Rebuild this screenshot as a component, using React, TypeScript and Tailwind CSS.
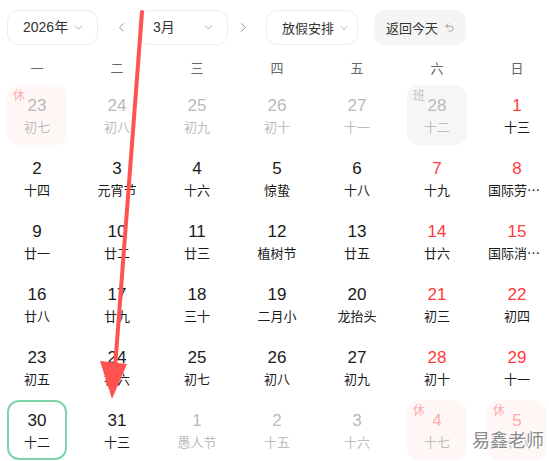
import { ChevronDown, ChevronLeft, ChevronRight, Undo2 } from 'lucide-react';

type Day = {
  d: number;
  lunar: string;
  muted?: boolean;
  red?: boolean;
  tag?: '休' | '班';
  today?: boolean;
};

const weeks: Day[][] = [
  [
    { d: 23, lunar: '初七', muted: true, tag: '休' },
    { d: 24, lunar: '初八', muted: true },
    { d: 25, lunar: '初九', muted: true },
    { d: 26, lunar: '初十', muted: true },
    { d: 27, lunar: '十一', muted: true },
    { d: 28, lunar: '十二', muted: true, tag: '班' },
    { d: 1, lunar: '十三', red: true },
  ],
  [
    { d: 2, lunar: '十四' },
    { d: 3, lunar: '元宵节' },
    { d: 4, lunar: '十六' },
    { d: 5, lunar: '惊蛰' },
    { d: 6, lunar: '十八' },
    { d: 7, lunar: '十九', red: true },
    { d: 8, lunar: '国际劳动妇女节', red: true },
  ],
  [
    { d: 9, lunar: '廿一' },
    { d: 10, lunar: '廿二' },
    { d: 11, lunar: '廿三' },
    { d: 12, lunar: '植树节' },
    { d: 13, lunar: '廿五' },
    { d: 14, lunar: '廿六', red: true },
    { d: 15, lunar: '国际消费者权益日', red: true },
  ],
  [
    { d: 16, lunar: '廿八' },
    { d: 17, lunar: '廿九' },
    { d: 18, lunar: '三十' },
    { d: 19, lunar: '二月小' },
    { d: 20, lunar: '龙抬头' },
    { d: 21, lunar: '初三', red: true },
    { d: 22, lunar: '初四', red: true },
  ],
  [
    { d: 23, lunar: '初五' },
    { d: 24, lunar: '初六' },
    { d: 25, lunar: '初七' },
    { d: 26, lunar: '初八' },
    { d: 27, lunar: '初九' },
    { d: 28, lunar: '初十', red: true },
    { d: 29, lunar: '十一', red: true },
  ],
  [
    { d: 30, lunar: '十二', today: true },
    { d: 31, lunar: '十三' },
    { d: 1, lunar: '愚人节', muted: true },
    { d: 2, lunar: '十五', muted: true },
    { d: 3, lunar: '十六', muted: true },
    { d: 4, lunar: '十七', muted: true, tag: '休' },
    { d: 5, lunar: '十八', muted: true, tag: '休' },
  ],
];

const weekdays = ['一', '二', '三', '四', '五', '六', '日'];

const DayCell = ({ day }: { day: Day }) => {
  const rest = day.tag === '休';
  const work = day.tag === '班';

  let box = 'border-2 border-transparent';
  if (day.today) box = 'border-2 border-[#7fd3ab]';
  else if (rest) box = 'border-2 border-transparent bg-[#fff6f6]';
  else if (work) box = 'border-2 border-transparent bg-[#f6f6f8]';

  let num = 'text-[#1a1a1a]';
  if (day.muted) num = rest && day.d < 10 ? 'text-[#ffaaaa]' : 'text-[#b9b9b9]';
  else if (day.red) num = 'text-[#ff3b3b]';

  const lunar = day.muted ? 'text-[#bdbdbd]' : 'text-[#1a1a1a]';

  return (
    <div className={`relative h-[60px] w-[60px] rounded-[12px] flex flex-col items-center pt-[8px] ${box}`}>
      {day.tag && (
        <span
          className={`absolute left-[4px] top-[1px] text-[12px] leading-[14px] ${
            rest ? 'text-[#ffaaaa]' : 'text-[#c4c4c4]'
          }`}
        >
          {day.tag}
        </span>
      )}
      <span className={`text-[17px] leading-[22px] ${num}`} style={{ fontFamily: '"Liberation Sans", Arial, sans-serif' }}>
        {day.d}
      </span>
      <span className={`mt-[1px] w-[58px] text-center truncate text-[13px] leading-[18px] ${lunar}`}>
        {day.lunar}
      </span>
    </div>
  );
};

export default function App() {
  return (
    <div
      className="relative w-[549px] h-[461px] overflow-hidden bg-white text-[#333]"
      style={{ fontFamily: '"Noto Sans CJK SC", "Noto Sans", sans-serif' }}
    >
      {/* Toolbar */}
      <div className="flex items-center pl-[7px] pt-[10px] h-[45px] whitespace-nowrap">
        <div className="w-[91px] h-[35px] rounded-[11px] border border-[#ececec] flex items-center pl-[15px] pr-[12px] justify-between">
          <span className="text-[14px]" style={{ fontFamily: '"Liberation Sans", "Noto Sans CJK SC", sans-serif' }}>
            2026年
          </span>
          <ChevronDown className="w-[13px] h-[13px] text-[#999]" strokeWidth={1.5} />
        </div>
        <ChevronLeft className="ml-[16px] w-[15px] h-[15px] text-[#888]" strokeWidth={1.5} />
        <div className="ml-[9px] w-[90px] h-[35px] rounded-[11px] border border-[#ececec] flex items-center pl-[14px] pr-[12px] justify-between">
          <span className="text-[14px]" style={{ fontFamily: '"Liberation Sans", "Noto Sans CJK SC", sans-serif' }}>
            3月
          </span>
          <ChevronDown className="w-[13px] h-[13px] text-[#999]" strokeWidth={1.5} />
        </div>
        <ChevronRight className="ml-[8px] w-[15px] h-[15px] text-[#888]" strokeWidth={1.5} />
        <div className="ml-[15px] w-[92px] h-[35px] rounded-[11px] border border-[#ececec] flex items-center pl-[15px] pr-[8px] gap-[4px]">
          <span className="text-[13px]">放假安排</span>
          <ChevronDown className="w-[12px] h-[12px] text-[#999] shrink-0" strokeWidth={1.5} />
        </div>
        <div className="ml-[16px] w-[92px] h-[35px] rounded-[11px] bg-[#f5f5f5] flex items-center pl-[12px] gap-[6px]">
          <span className="text-[13px]">返回今天</span>
          <Undo2 className="w-[11px] h-[11px] text-[#999] shrink-0" strokeWidth={2} />
        </div>
      </div>

      {/* Weekday header */}
      <div className="grid grid-cols-[repeat(7,60px)] gap-x-[20px] pl-[7px] mt-[13px] h-[20px]">
        {weekdays.map((w) => (
          <div key={w} className="text-center text-[13px] leading-[20px] text-[#666]">
            {w}
          </div>
        ))}
      </div>

      {/* Days */}
      <div className="grid grid-cols-[repeat(7,60px)] gap-x-[20px] gap-y-[3px] pl-[7px] mt-[7px]">
        {weeks.flat().map((day, i) => (
          <DayCell key={i} day={day} />
        ))}
      </div>

      {/* Annotation arrow */}
      <svg className="absolute inset-0 pointer-events-none" width="549" height="461" viewBox="0 0 549 461">
        <line x1="142" y1="12" x2="115" y2="368" stroke="#ff5252" strokeWidth="4" strokeLinecap="round" />
        <polygon points="100,361 127,364 112,399" fill="#ff5252" />
      </svg>

      {/* Watermark */}
      <span
        className="absolute left-[472px] top-[428px] text-[18px] leading-[22px] text-[#8a8a8a]"
        style={{ textShadow: '0 0 1px #fff, 1px 1px 0 #fff, -1px -1px 0 #fff' }}
      >
        易鑫老师
      </span>
    </div>
  );
}
